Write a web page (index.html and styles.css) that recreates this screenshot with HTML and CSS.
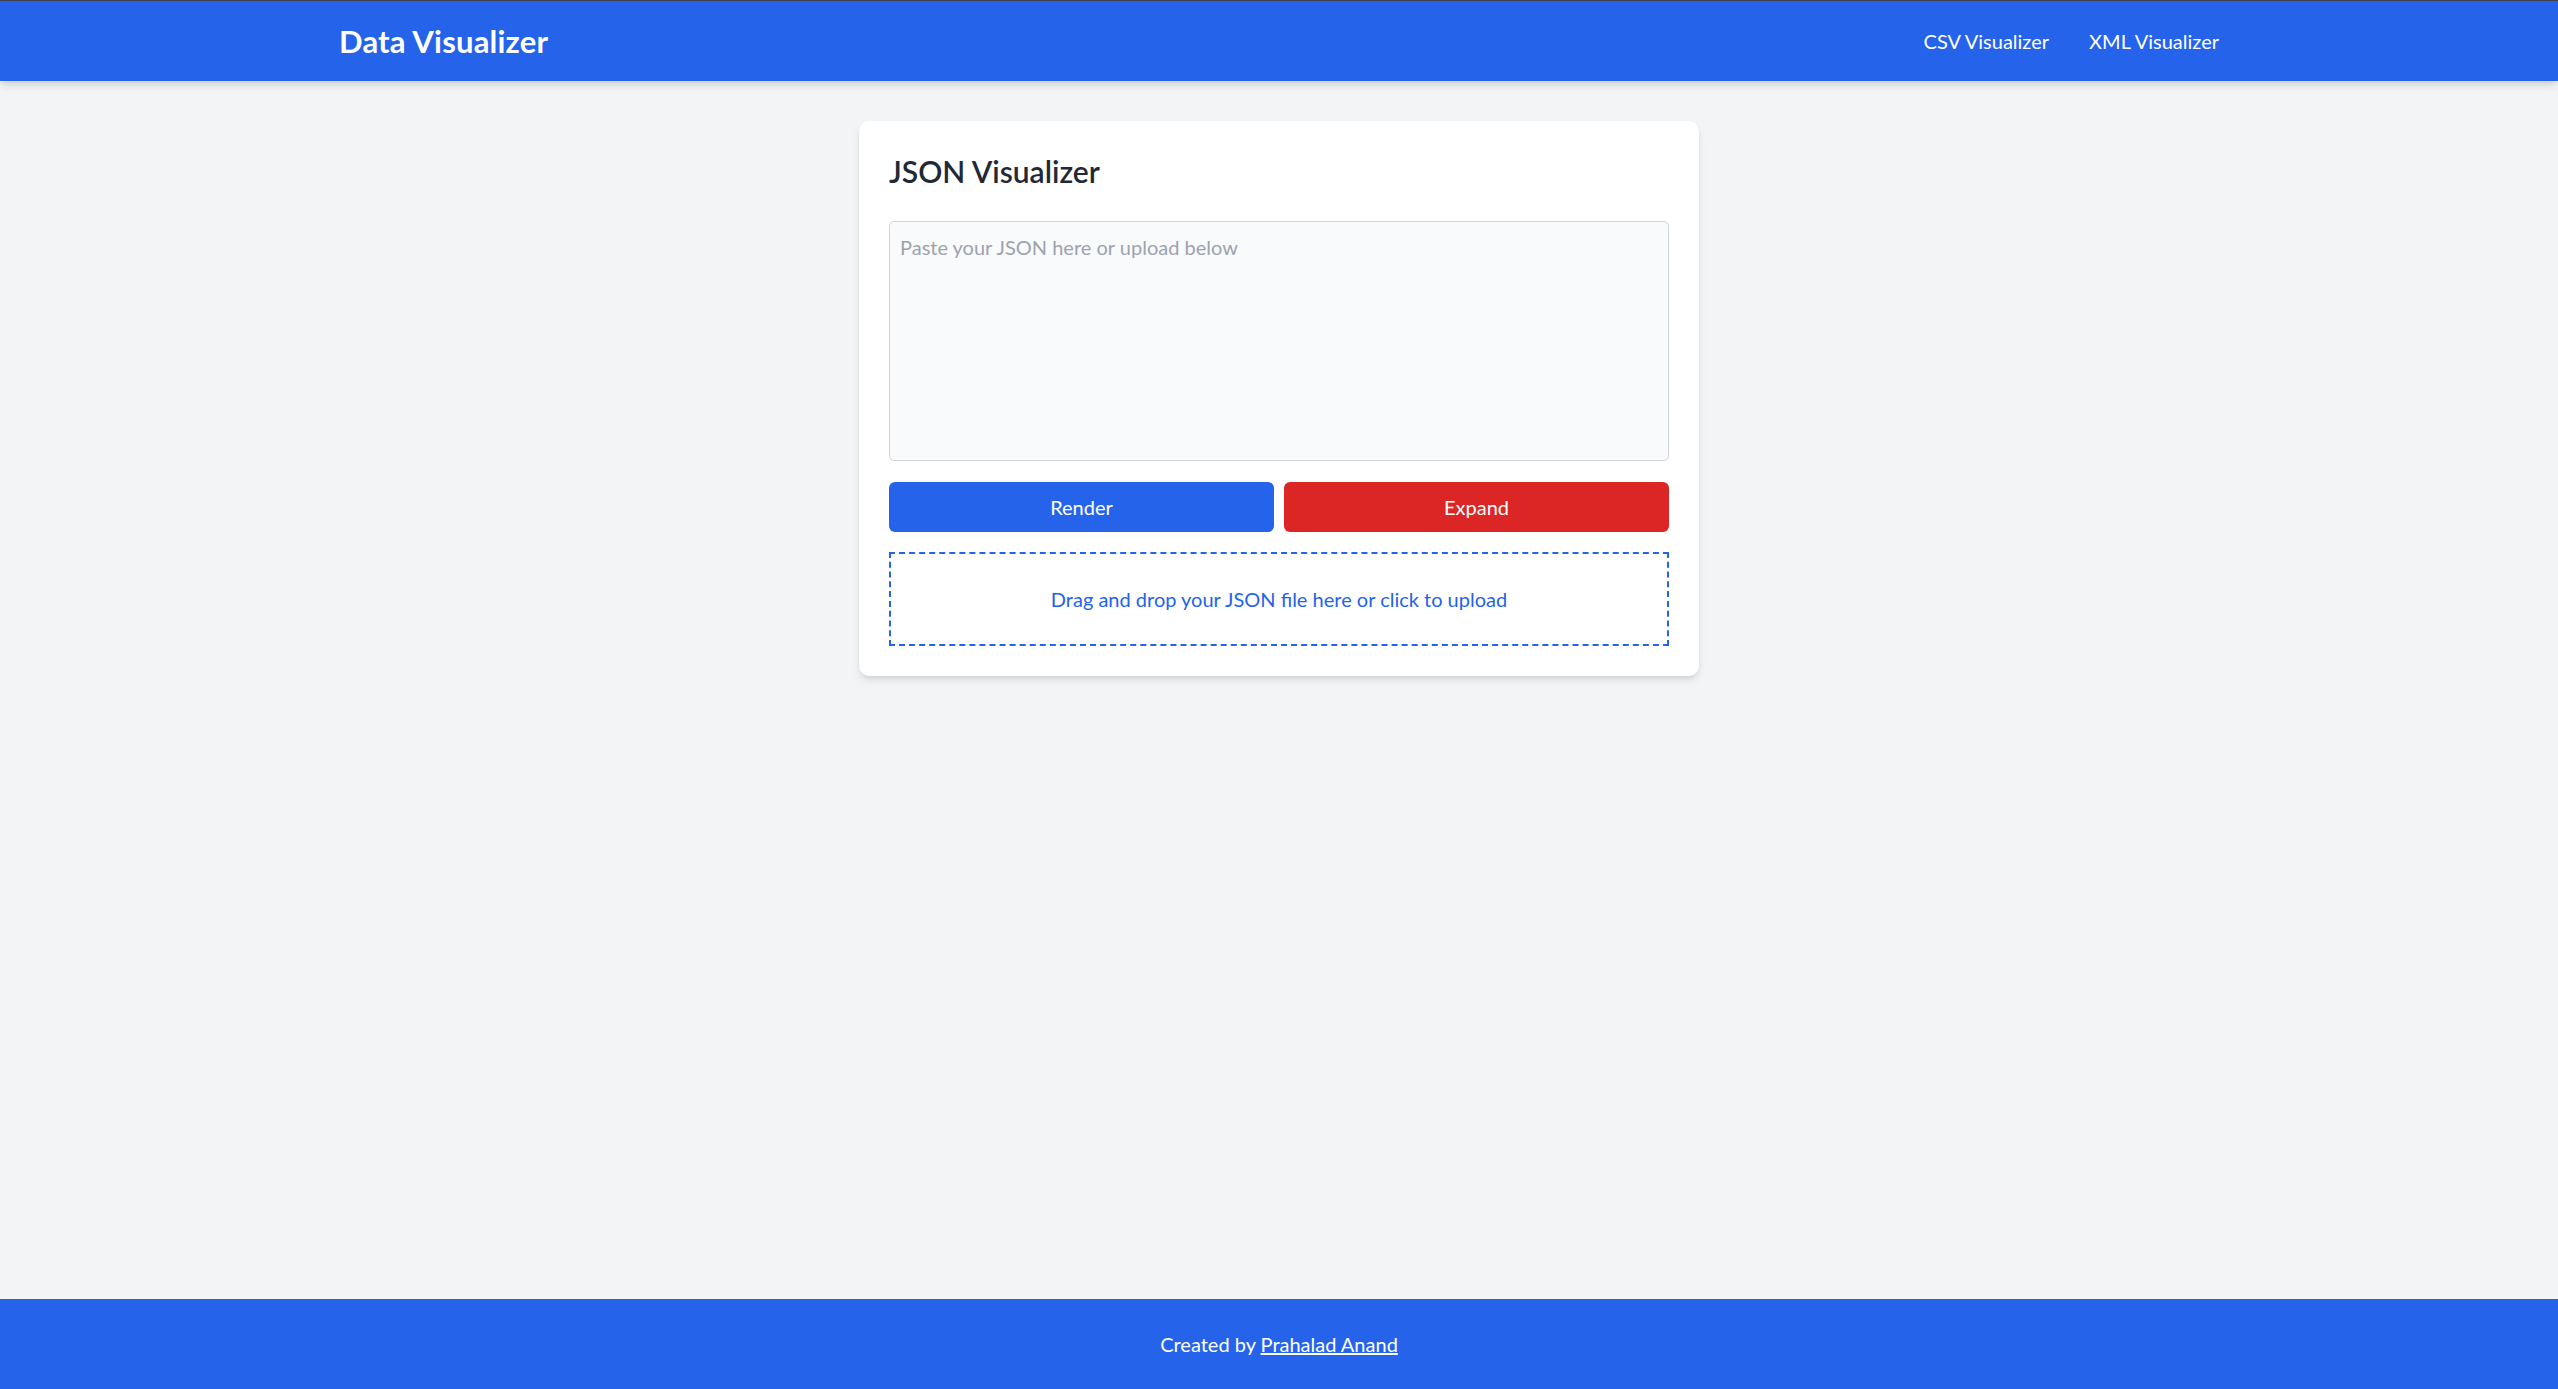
FILE: index.html
```html
<!DOCTYPE html>
<html lang="en">
<head>
<meta charset="utf-8">
<title>JSON Visualizer</title>
<link rel="stylesheet" href="styles.css">
</head>
<body>
<header class="topbar">
  <div class="container bar">
    <div class="brand">Data Visualizer</div>
    <nav class="nav">
      <a class="nav-link" href="#">CSV Visualizer</a>
      <a class="nav-link" href="#">XML Visualizer</a>
    </nav>
  </div>
</header>
<main class="main">
  <section class="card">
    <h2 class="card-title">JSON Visualizer</h2>
    <textarea class="json-input" placeholder="Paste your JSON here or upload below"></textarea>
    <div class="actions">
      <button class="btn btn-blue">Render</button>
      <button class="btn btn-red">Expand</button>
    </div>
    <div class="dropzone">Drag and drop your JSON file here or click to upload</div>
  </section>
</main>
<footer class="footer">
  Created by <a class="footer-link" href="#">Prahalad Anand</a>
</footer>
</body>
</html>
```
FILE: styles.css
```css
* { box-sizing: border-box; }
html, body { margin: 0; padding: 0; }
body {
  min-height: 100vh;
  display: flex;
  flex-direction: column;
  background: #f3f4f6;
  font-family: "Lato", "Noto Sans", "Liberation Sans", sans-serif;
  color: #1f2937;
}
.topbar {
  background: #2563eb;
  color: #fff;
  padding: 20px 0;
  border-top: 1px solid #3b3f4a;
  box-shadow: 0 5px 8px -1px rgba(0,0,0,0.12), 0 2px 5px -2px rgba(0,0,0,0.1);
  position: relative;
  z-index: 1;
}
.container {
  max-width: 1920px;
  margin: 0 auto;
  padding: 0 20px;
  width: 100%;
}
.bar {
  display: flex;
  justify-content: space-between;
  align-items: center;
}
.brand {
  font-size: 31px;
  line-height: 40px;
  font-weight: 700;
  letter-spacing: 0.2px;
}
.nav {
  display: flex;
  gap: 40px;
  font-size: 20px;
  line-height: 30px;
}
.nav-link { color: #fff; text-decoration: none; }
.main {
  flex: 1;
  padding-top: 40px;
}
.card {
  max-width: 840px;
  margin: 0 auto;
  background: #fff;
  border-radius: 10px;
  padding: 30px;
  box-shadow: 0 5px 8px -1px rgba(0,0,0,0.1), 0 2px 5px -2px rgba(0,0,0,0.1);
}
.card-title {
  margin: 0 0 30px;
  font-size: 30px;
  line-height: 40px;
  font-weight: 600;
  color: #1f2937;
}
.json-input {
  display: block;
  width: 100%;
  height: 240px;
  margin: 0;
  padding: 10px;
  border: 1px solid #d1d5db;
  border-radius: 5px;
  background: #f9fafb;
  font-family: inherit;
  font-size: 20px;
  line-height: 30px;
  color: #1f2937;
  resize: none;
  outline: none;
}
.json-input::placeholder { color: #9ca3af; }
.actions {
  display: grid;
  grid-template-columns: 1fr 1fr;
  gap: 10px;
  margin-top: 21px;
}
.btn {
  border: 0;
  border-radius: 6px;
  padding: 10px 20px;
  font-family: inherit;
  font-size: 20px;
  line-height: 30px;
  color: #fff;
  cursor: pointer;
}
.btn-blue { background: #2563eb; }
.btn-red { background: #dc2626; }
.dropzone {
  margin-top: 20px;
  border: 2.5px dashed #2563eb;
  padding: 30px;
  text-align: center;
  color: #2563eb;
  font-size: 20px;
  line-height: 30px;
}
.footer {
  background: #2563eb;
  color: #fff;
  text-align: center;
  padding: 30px 0;
  font-size: 20px;
  line-height: 30px;
}
.footer-link { color: #fff; text-decoration: underline; }
```
